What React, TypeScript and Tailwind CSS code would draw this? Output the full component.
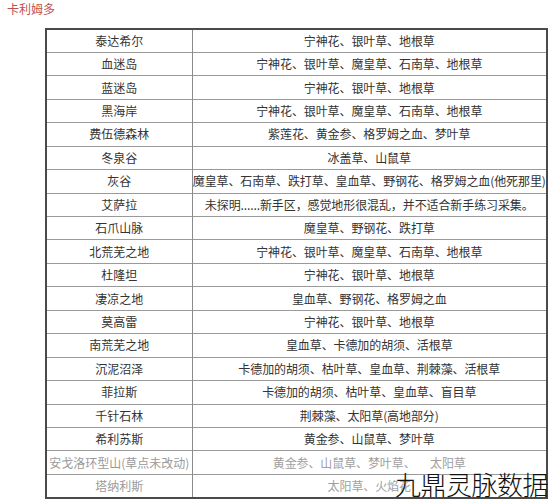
import React from 'react';

type Row = { zone: string; herbs: string; faded?: boolean };

const rows: Row[] = [
  { zone: '泰达希尔', herbs: '宁神花、银叶草、地根草' },
  { zone: '血迷岛', herbs: '宁神花、银叶草、魔皇草、石南草、地根草' },
  { zone: '蓝迷岛', herbs: '宁神花、银叶草、地根草' },
  { zone: '黑海岸', herbs: '宁神花、银叶草、魔皇草、石南草、地根草' },
  { zone: '费伍德森林', herbs: '紫莲花、黄金参、格罗姆之血、梦叶草' },
  { zone: '冬泉谷', herbs: '冰盖草、山鼠草' },
  { zone: '灰谷', herbs: '魔皇草、石南草、跌打草、皇血草、野钢花、格罗姆之血(他死那里)' },
  { zone: '艾萨拉', herbs: '未探明......新手区，感觉地形很混乱，并不适合新手练习采集。' },
  { zone: '石爪山脉', herbs: '魔皇草、野钢花、跌打草' },
  { zone: '北荒芜之地', herbs: '宁神花、银叶草、魔皇草、石南草、地根草' },
  { zone: '杜隆坦', herbs: '宁神花、银叶草、地根草' },
  { zone: '凄凉之地', herbs: '皇血草、野钢花、格罗姆之血' },
  { zone: '莫高雷', herbs: '宁神花、银叶草、地根草' },
  { zone: '南荒芜之地', herbs: '皇血草、卡德加的胡须、活根草' },
  { zone: '沉泥沼泽', herbs: '卡德加的胡须、枯叶草、皇血草、荆棘藻、活根草' },
  { zone: '菲拉斯', herbs: '卡德加的胡须、枯叶草、皇血草、盲目草' },
  { zone: '千针石林', herbs: '荆棘藻、太阳草(高地部分)' },
  { zone: '希利苏斯', herbs: '黄金参、山鼠草、梦叶草' },
  { zone: '安戈洛环型山(草点未改动)', herbs: '黄金参、山鼠草、梦叶草、\u2003 太阳草', faded: true },
  { zone: '塔纳利斯', herbs: '太阳草、火焰花', faded: true },
];

export default function App() {
  return (
    <div className="relative w-[550px] h-[500px] overflow-hidden bg-white font-['Noto_Sans_CJK_SC','Noto_Sans',sans-serif]">
      <div className="pl-[7px] pt-[1px] text-[12px] leading-[16px] text-[#c0504d]">卡利姆多</div>

      <table className="ml-[45px] mt-[11px] w-[503px] border-collapse border-2 border-[#4a4a4a] text-[12px] leading-none">
        <tbody>
          {rows.map((r, i) => (
            <tr key={i} className="h-[23.45px] border-b border-[#9a9a9a]">
              <td className={`w-[146px] border-r border-[#8a8a8a] p-0 text-center whitespace-nowrap ${r.faded ? 'text-[#9a9a9a]' : 'text-[#333]'}`}>
                {r.zone}
              </td>
              <td className={`p-0 text-center whitespace-nowrap tracking-[-0.1px] ${r.faded ? 'text-[#a0a0a0]' : 'text-[#333]'}`}>
                {r.herbs}
              </td>
            </tr>
          ))}
        </tbody>
      </table>

      <div className="absolute right-[2px] bottom-[3px] text-[26px] leading-none text-[#111] font-light tracking-[-0.5px]">
        九鼎灵脉数据
      </div>
    </div>
  );
}
